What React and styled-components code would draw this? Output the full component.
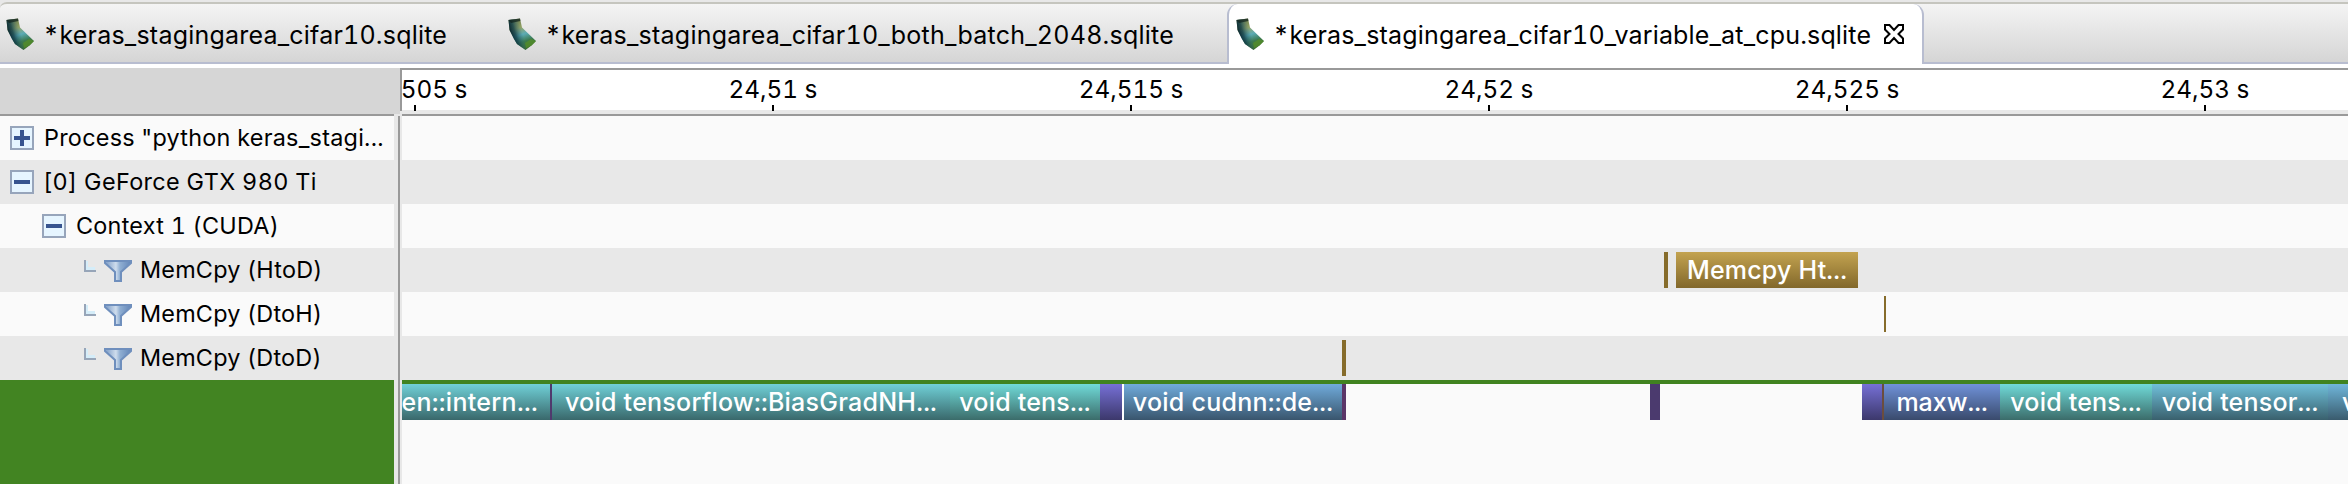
import React from "react";
import styled, { createGlobalStyle } from "styled-components";

const GlobalStyle = createGlobalStyle`
  * { box-sizing: border-box; }
  body {
    margin: 0;
    background: #fafafa;
    color: #000;
    font-family: Inter, "Liberation Sans", sans-serif;
    font-variant-numeric: tabular-nums;
  }
`;

const Window = styled.div`
  display: flex;
  flex-direction: column;
  width: 2348px;
  height: 484px;
  overflow: hidden;
  background: #e8e8e8;
`;

const TabBar = styled.div`
  display: flex;
  flex: none;
  height: 62px;
  margin-top: 2px;
  border-top: 2px solid #c5c5be;
  border-bottom: 2px solid #b8bdd0;
  border-top-left-radius: 7px 6px;
  background: linear-gradient(#f4f4f4, #d5d5d5);
`;

const Tab = styled.div`
  display: flex;
  align-items: center;
  flex: none;
  width: ${(p) => p.$width}px;
  height: ${(p) => (p.$active ? 60 : 58)}px;
  padding-left: ${(p) => (p.$active ? 7 : 6)}px;
  border: solid #b8bdd0;
  border-width: ${(p) => (p.$active ? "0 2px" : "0")};
  border-radius: ${(p) => (p.$active ? "11px 11px 0 0" : "0")};
  background: ${(p) => (p.$active ? "#fff" : "transparent")};
`;

const TabContent = styled.div`
  display: flex;
  align-items: center;
  align-self: flex-start;
  height: 60px;
`;

const TabTitle = styled.span`
  margin-left: 8px;
  font-size: 25px;
  line-height: 32px;
  letter-spacing: ${(p) => p.$spacing}px;
  white-space: nowrap;
  padding-top: 1px;
`;

const CloseIcon = styled.svg`
  width: 20px;
  height: 20px;
  margin-left: 13px;
`;

const RulerRow = styled.div`
  display: flex;
  flex: none;
  height: 52px;
  border-top: 4px solid #fff;
`;

const RulerCorner = styled.div`
  width: 400px;
  height: 46px;
  background: #d6d6d6;
`;

const Ruler = styled.div`
  display: flex;
  flex: 1;
  height: 43px;
  overflow: hidden;
  border-top: 2px solid #999;
  border-left: 2px solid #999;
  background: linear-gradient(#fff 40px, #e8e8e8 40px);
`;

const Scale = styled.div`
  display: flex;
  flex: none;
  margin-left: -166px;
`;

const Mark = styled.div`
  display: flex;
  flex-direction: column;
  align-items: center;
  justify-content: space-between;
  width: 358px;
  height: 41px;
  padding-top: 4px;
  font-size: 24.3px;
  line-height: 31px;

  &::after {
    content: "";
    width: 2px;
    height: 6px;
    background: #000;
  }
`;

const Body = styled.div`
  display: flex;
  flex: 1;
  margin-top: -2px;
`;

const Tree = styled.div`
  display: flex;
  flex-direction: column;
  flex: none;
  width: 394px;
  border-top: 2px solid #999;
`;

const Sash = styled.div`
  flex: none;
  width: 8px;
  margin-top: 2px;
  background: linear-gradient(90deg, #e8e8e8 4px, #999 4px, #999 6px, #e8e8e8 6px);
`;

const TreeRow = styled.div`
  display: flex;
  align-items: center;
  flex: none;
  height: 44px;
  padding-left: ${(p) => p.$indent}px;
  background: ${(p) => (p.$shaded ? "#e8e8e8" : "#fafafa")};
`;

const TreeLabel = styled.span`
  margin-left: ${(p) => p.$gap}px;
  font-size: 23.4px;
  line-height: 30px;
  letter-spacing: ${(p) => p.$spacing}px;
  white-space: nowrap;
`;

const Selected = styled.div`
  flex: 1;
  background: #428422;
`;

const BoxIcon = styled.svg`
  width: 24px;
  height: 24px;
`;

const ElbowIcon = styled.svg`
  width: 12px;
  height: 12px;
  margin: 0 8px 8px 0;
`;

const FunnelIcon = styled.svg`
  width: 28px;
  height: 24px;
  margin-top: 2px;
`;

const Chart = styled.div`
  display: flex;
  flex-direction: column;
  flex: 1;
  min-width: 0;
  border-top: 2px solid #999;
  background: #fafafa;
`;

const Lane = styled.div`
  display: flex;
  flex: none;
  height: 44px;
  padding-top: 4px;
  overflow: hidden;
  background: ${(p) => (p.$shaded ? "#e8e8e8" : "#fafafa")};
`;

const KernelLane = styled(Lane)`
  height: 40px;
  padding-top: 0;
  border-top: 4px solid #408320;
  box-sizing: content-box;
`;

const Bar = styled.div`
  display: flex;
  flex: none;
  align-items: center;
  justify-content: ${(p) => p.$align || "center"};
  width: ${(p) => p.$width}px;
  height: 36px;
  margin-left: ${(p) => p.$gap || 0}px;
  padding: ${(p) => p.$padding || "1px 0 0"};
  overflow: hidden;
  background: linear-gradient(${(p) => p.$from}, ${(p) => p.$to || p.$from});
  color: #fff;
  font-size: 25px;
  font-weight: 500;
  line-height: 35px;
  letter-spacing: ${(p) => p.$spacing ?? 0.2}px;
  white-space: nowrap;
`;

const Divider = styled.div`
  flex: none;
  width: 2px;
  height: 36px;
  background: #fff;
`;

const StateIcon = styled.svg`
  flex: none;
  width: 29px;
  height: 33px;
  margin-top: 1px;
`;

function FileIcon({ id }) {
  return (
    <StateIcon viewBox="0 0 29 33">
      <defs>
        <linearGradient id={`${id}-land`} x1="0.45" y1="0" x2="0.75" y2="1">
          <stop offset="0" stopColor="#6f7f50" />
          <stop offset="0.25" stopColor="#93a265" />
          <stop offset="0.48" stopColor="#5cabb5" />
          <stop offset="0.7" stopColor="#3c7a50" />
          <stop offset="1" stopColor="#3d6a25" />
        </linearGradient>
        <linearGradient id={`${id}-shade`} x1="0" y1="0.55" x2="0.65" y2="0.32">
          <stop offset="0.1" stopColor="#06202a" />
          <stop offset="0.38" stopColor="#123f4a" stopOpacity="0.8" />
          <stop offset="0.75" stopColor="#2c6c7a" stopOpacity="0" />
        </linearGradient>
      </defs>
      <path d="M0.5 2 L12 0.5 L14 9.5 L28 23 L23.5 27.5 L17.5 32 L9 26 L6 21 L1.5 12 Z" fill={`url(#${id}-land)`} />
      <path d="M0.5 2 L12 0.5 L14 9.5 L28 23 L23.5 27.5 L17.5 32 L9 26 L6 21 L1.5 12 Z" fill={`url(#${id}-shade)`} />
      <path d="M0.5 2 L12 0.5 L12.4 3 L3 5 Z" fill="#14251f" opacity="0.75" />
      <path d="M17 25 L23 21 L28 23 L23.5 27.5 L18 30 Z" fill="#559026" opacity="0.7" />
    </StateIcon>
  );
}

function Expander({ open }) {
  return (
    <BoxIcon viewBox="0 0 24 24">
      <rect x="1" y="1" width="22" height="22" fill="#e6f5ff" stroke="#97a5bb" strokeWidth="2" />
      <rect x="4" y="10" width="16" height="4" fill="#37548f" />
      {!open && <rect x="10" y="4" width="4" height="16" fill="#37548f" />}
    </BoxIcon>
  );
}

function Elbow() {
  return (
    <ElbowIcon viewBox="0 0 12 12">
      <path d="M2 1 H4 V7 H11 V10 H2 Z" fill="#d5edf9" />
      <path d="M1 0 V11 H12" fill="none" stroke="#97a5b8" strokeWidth="2" />
    </ElbowIcon>
  );
}

function Funnel({ id }) {
  return (
    <FunnelIcon viewBox="0 0 28 24">
      <defs>
        <linearGradient id={id} x1="0" x2="1">
          <stop offset="0.1" stopColor="#8da9ce" />
          <stop offset="0.42" stopColor="#cfdded" />
          <stop offset="0.58" stopColor="#8faed2" />
          <stop offset="1" stopColor="#6386b8" />
        </linearGradient>
      </defs>
      <path d="M1 2 H27 V4 L17 13 V22 H11 V13 L1 4 Z" fill={`url(#${id})`} stroke="#6f8fbd" strokeWidth="2" />
    </FunnelIcon>
  );
}

const ticks = ["24,505 s", "24,51 s", "24,515 s", "24,52 s", "24,525 s", "24,53 s"];

const copies = [
  { name: "MemCpy (HtoD)", shaded: true },
  { name: "MemCpy (DtoH)", shaded: false },
  { name: "MemCpy (DtoD)", shaded: true },
];

export default function App() {
  return (
    <Window>
      <GlobalStyle />
      <TabBar>
        <Tab $width={502}>
          <TabContent>
            <FileIcon id="tab-a" />
            <TabTitle $spacing={0.21}>*keras_stagingarea_cifar10.sqlite</TabTitle>
          </TabContent>
        </Tab>
        <Tab $width={725}>
          <TabContent>
            <FileIcon id="tab-b" />
            <TabTitle $spacing={0.23}>*keras_stagingarea_cifar10_both_batch_2048.sqlite</TabTitle>
          </TabContent>
        </Tab>
        <Tab $width={697} $active>
          <TabContent>
            <FileIcon id="tab-c" />
            <TabTitle $spacing={0.17}>*keras_stagingarea_cifar10_variable_at_cpu.sqlite</TabTitle>
            <CloseIcon viewBox="0 0 20 20">
              <path
                d="M1 1 H5.5 L10 6 L14.5 1 H19 V5.5 L14.5 10 L19 14.5 V19 H14.5 L10 14 L5.5 19 H1 V14.5 L5.5 10 L1 5.5 Z"
                fill="#fff"
                stroke="#000"
                strokeWidth="2"
              />
            </CloseIcon>
          </TabContent>
        </Tab>
      </TabBar>

      <RulerRow>
        <RulerCorner />
        <Ruler>
          <Scale>
            {ticks.map((t) => (
              <Mark key={t}>{t}</Mark>
            ))}
          </Scale>
        </Ruler>
      </RulerRow>

      <Body>
        <Tree>
          <TreeRow $indent={10}>
            <Expander />
            <TreeLabel $gap={10} $spacing={0.25}>Process "python keras_stagi...</TreeLabel>
          </TreeRow>
          <TreeRow $indent={10} $shaded>
            <Expander open />
            <TreeLabel $gap={9} $spacing={0.35}>[0] GeForce GTX 980 Ti</TreeLabel>
          </TreeRow>
          <TreeRow $indent={42}>
            <Expander open />
            <TreeLabel $gap={10} $spacing={0.25}>Context 1 (CUDA)</TreeLabel>
          </TreeRow>
          {copies.map((c, i) => (
            <TreeRow key={c.name} $indent={84} $shaded={c.shaded}>
              <Elbow />
              <Funnel id={`funnel-${i}`} />
              <TreeLabel $gap={8} $spacing={0.2}>{c.name}</TreeLabel>
            </TreeRow>
          ))}
          <Selected />
        </Tree>
        <Sash />
        <Chart>
          <Lane />
          <Lane $shaded />
          <Lane />
          <Lane $shaded>
            <Bar $gap={1262} $width={4} $from="#866c2b" />
            <Bar $gap={8} $width={182} $from="#c3a350" $to="#82682b">Memcpy Ht...</Bar>
          </Lane>
          <Lane>
            <Bar $gap={1482} $width={2} $from="#866c2b" />
          </Lane>
          <Lane $shaded>
            <Bar $gap={940} $width={4} $from="#866c2b" />
          </Lane>
          <KernelLane>
            <Bar $width={148} $spacing={0.3} $align="flex-end" $padding="1px 12px 0 0" $from="#70d0d7" $to="#39686b">en::intern...</Bar>
            <Bar $width={2} $from="#50396d" />
            <Bar $width={398} $spacing={0.25} $from="#70d0d7" $to="#39686b">void tensorflow::BiasGradNH...</Bar>
            <Bar $width={150} $from="#70dad8" $to="#3b6c6a">void tens...</Bar>
            <Bar $width={22} $from="#7670d6" $to="#3c386b" />
            <Divider />
            <Bar $width={218} $spacing={0.25} $from="#70abdb" $to="#39556d">void cudnn::de...</Bar>
            <Bar $width={4} $from="#5b3668" />
            <Bar $gap={304} $width={10} $from="#4b3a6e" />
            <Bar $gap={202} $width={20} $from="#7670d6" $to="#3c386b" />
            <Bar $width={2} $from="#6b4d3e" />
            <Bar $width={116} $from="#7092d9" $to="#394a6c" $spacing={0}>maxw...</Bar>
            <Bar $width={152} $from="#70dad8" $to="#3b6c6a">void tens...</Bar>
            <Bar $width={176} $from="#70c0da" $to="#39606d">void tensor...</Bar>
            <Bar $width={20} $align="flex-start" $padding="1px 0 0 14px" $from="#70b6da" $to="#395b6d">v</Bar>
          </KernelLane>
        </Chart>
      </Body>
    </Window>
  );
}
